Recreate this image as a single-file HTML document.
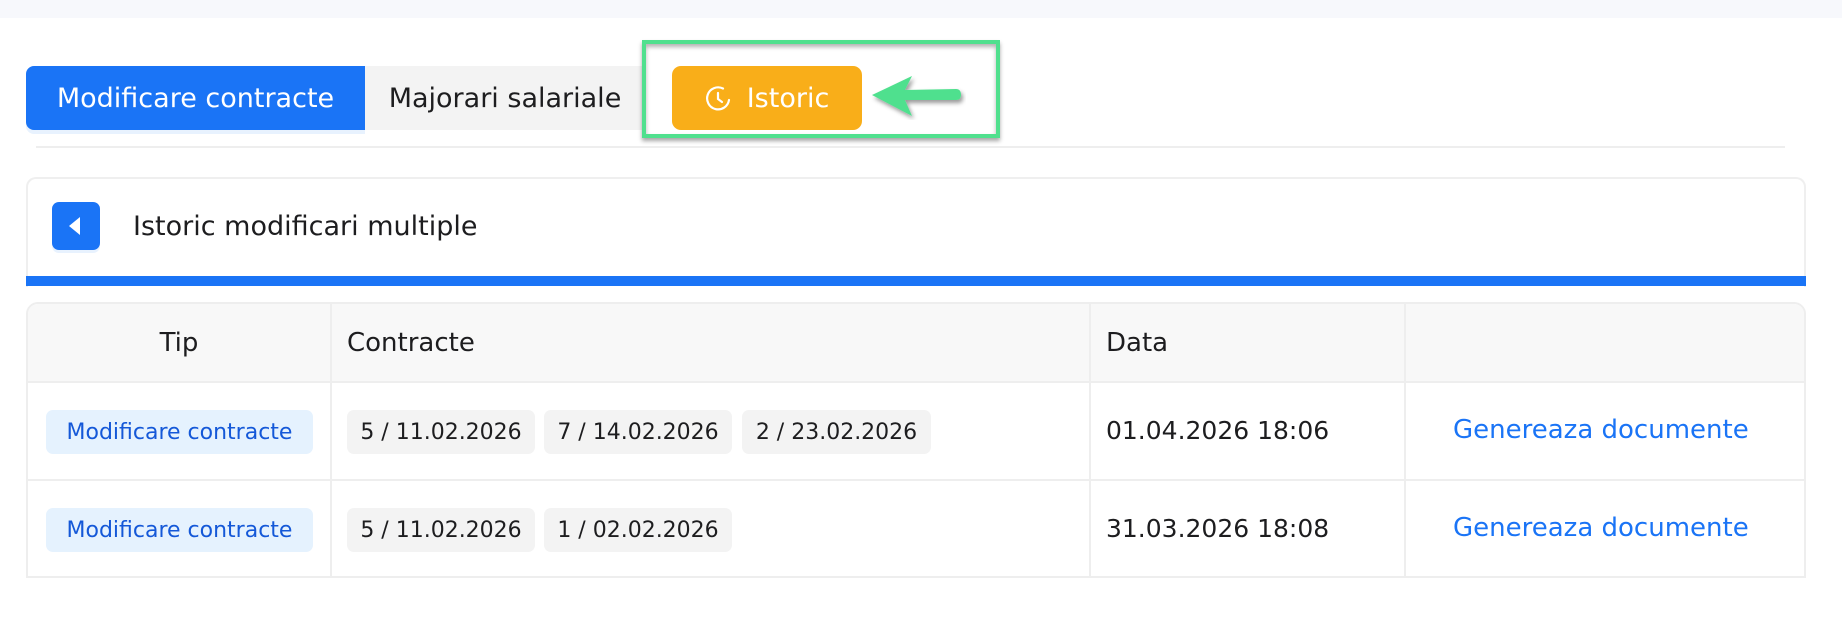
<!DOCTYPE html>
<html><head><meta charset="utf-8"><style>
*{margin:0;padding:0;box-sizing:border-box}
body{width:1842px;height:626px;background:#fff;font-family:"DejaVu Sans","Liberation Sans",sans-serif;position:relative;overflow:hidden;color:#1d1d1f}
.abs{position:absolute}
.top{left:0;top:0;width:1842px;height:18px;background:#f7f8fc}
.tab{top:66px;height:64px;display:flex;align-items:center;justify-content:center;font-size:27px}
.chip{position:absolute;height:44px;top:0;background:#f3f3f3;border-radius:7px;font-size:22px;display:flex;align-items:center;justify-content:center}
.badge{position:absolute;left:18px;width:267px;height:44px;background:#e5f2fe;color:#1458d8;border-radius:7px;font-size:22px;display:flex;align-items:center;justify-content:center}
.cell{position:absolute;font-size:25px}
.link{color:#1a74f6;font-size:26px}
</style></head><body>
<div class="abs top"></div>
<div class="abs tab" style="left:26px;width:339px;background:#1a74f6;color:#fff;border-radius:8px 0 0 8px;box-shadow:0 4px 0 #e8f2fe">Modificare contracte</div>
<div class="abs tab" style="left:365px;width:280px;background:#f3f3f3">Majorari salariale</div>
<div class="abs" style="left:642px;top:40px;width:358px;height:98px;border:4px solid #50e08e;box-shadow:0 3px 4px rgba(0,0,0,.35), inset 0 3px 4px rgba(0,0,0,.3)"></div>
<div class="abs tab" style="left:672px;width:190px;background:#f9ae19;color:#fff;border-radius:9px;gap:14px">
<svg width="28" height="28" viewBox="0 0 28 28" fill="none" stroke="#fff" stroke-width="2.2" stroke-linecap="round"><path d="M18 4.5A11 11 0 1 0 24 16"/><path d="M13 9v6l4 3"/></svg><span>Istoric</span></div>
<svg class="abs" style="left:870px;top:74px" width="96" height="46" viewBox="0 0 96 46"><defs><filter id="s"><feDropShadow dx="2" dy="3" stdDeviation="2" flood-opacity=".4"/></filter></defs><path d="M2 21 L42 2 L35 16 L86 15 Q91 15 91 21 Q91 26 86 26 L35 26 L42 42 Z" fill="#50e08e" filter="url(#s)"/></svg>
<div class="abs" style="left:36px;top:146px;width:1749px;height:2px;background:#eeeeee"></div>
<div class="abs" style="left:26px;top:177px;width:1780px;height:110px;border:2px solid #efefef;border-bottom:none;border-radius:10px 10px 0 0"></div>
<div class="abs" style="left:26px;top:276px;width:1780px;height:10px;background:#1a74f6"></div>
<div class="abs" style="left:52px;top:202px;width:48px;height:48px;background:#1a74f6;border-radius:7px;box-shadow:0 3px 0 #e8f2fe"><div style="position:absolute;left:17px;top:15px;width:0;height:0;border-top:9px solid transparent;border-bottom:9px solid transparent;border-right:11px solid #fff"></div></div>
<div class="abs" style="left:133px;top:211px;font-size:27px">Istoric modificari multiple</div>

<div class="abs" style="left:26px;top:302px;width:1780px;height:276px;border:2px solid #eeeeee;border-radius:12px 12px 0 0;overflow:hidden">
 <div class="abs" style="left:0;top:0;width:100%;height:79px;background:#f8f8f8;border-bottom:2px solid #eeeeee"></div>
 <div class="abs" style="left:0;top:175px;width:100%;height:2px;background:#eeeeee"></div>
 <div class="abs" style="left:302px;top:0;width:2px;height:100%;background:#eeeeee"></div>
 <div class="abs" style="left:1061px;top:0;width:2px;height:100%;background:#eeeeee"></div>
 <div class="abs" style="left:1376px;top:0;width:2px;height:100%;background:#eeeeee"></div>
 <div class="cell" style="left:0;width:302px;text-align:center;top:24px;font-size:26px">Tip</div>
 <div class="cell" style="left:319px;top:24px;font-size:26px">Contracte</div>
 <div class="cell" style="left:1078px;top:24px;font-size:26px">Data</div>
 <div class="abs" style="left:0;top:106px;width:100%;height:44px">
  <div class="badge">Modificare contracte</div>
  <div class="chip" style="left:319px;width:188px">5 / 11.02.2026</div>
  <div class="chip" style="left:516px;width:188px">7 / 14.02.2026</div>
  <div class="chip" style="left:714px;width:189px">2 / 23.02.2026</div>
  <div class="cell" style="left:1078px;top:6px">01.04.2026 18:06</div>
  <div class="cell link" style="left:1425px;top:5px">Genereaza documente</div>
 </div>
 <div class="abs" style="left:0;top:204px;width:100%;height:44px">
  <div class="badge">Modificare contracte</div>
  <div class="chip" style="left:319px;width:188px">5 / 11.02.2026</div>
  <div class="chip" style="left:516px;width:188px">1 / 02.02.2026</div>
  <div class="cell" style="left:1078px;top:6px">31.03.2026 18:08</div>
  <div class="cell link" style="left:1425px;top:5px">Genereaza documente</div>
 </div>
</div>
</body></html>
